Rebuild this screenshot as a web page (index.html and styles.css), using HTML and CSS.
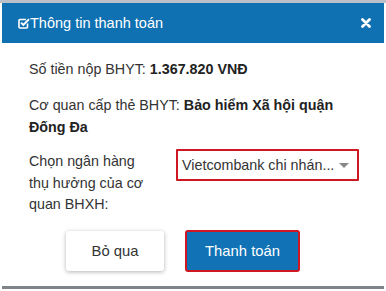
FILE: index.html
```html
<!DOCTYPE html>
<html lang="vi">
<head>
<meta charset="utf-8">
<link rel="stylesheet" href="styles.css">
</head>
<body>
<div class="page">
  <div class="modal">
    <div class="modal-header">
      <div class="title">
        <svg class="ico-check" width="12" height="12" viewBox="0 0 12 12">
          <path d="M9.5 6.5V10a1 1 0 0 1-1 1H2a1 1 0 0 1-1-1V3.5a1 1 0 0 1 1-1h6" fill="none" stroke="#fff" stroke-width="1.6"/>
          <path d="M3 5.6l2.3 2.3L11 2.2" fill="none" stroke="#fff" stroke-width="2"/>
        </svg>
        <span>Thông tin thanh toán</span>
      </div>
      <svg class="ico-close" width="10" height="10" viewBox="0 0 10 10">
        <path d="M1.5 1.5L8.5 8.5M8.5 1.5L1.5 8.5" stroke="#fff" stroke-width="2.8" stroke-linecap="round"/>
      </svg>
    </div>
    <div class="modal-body">
      <p class="line">Số tiền nộp BHYT: <b>1.367.820 VNĐ</b></p>
      <p class="line gap">Cơ quan cấp thẻ BHYT: <b>Bảo hiểm Xã hội quận Đống Đa</b></p>
      <div class="row">
        <div class="label">Chọn ngân hàng thụ hưởng của cơ quan BHXH:</div>
        <div class="select">
          <span class="select-text">Vietcombank chi nhán...</span>
          <span class="caret"></span>
        </div>
      </div>
      <div class="actions">
        <button class="btn btn-cancel">Bỏ qua</button>
        <button class="btn btn-pay">Thanh toán</button>
      </div>
    </div>
    <div class="bottom-bar"></div>
  </div>
</div>
</body>
</html>
```

FILE: styles.css
```css
html, body {
  margin: 0;
  padding: 0;
  background: #ffffff;
}
body {
  font-family: "Liberation Sans", Arial, sans-serif;
  color: #333333;
}
.page {
  border-top: 3px solid #b9c0c7;
  width: 386px;
  height: 288px;
  overflow: hidden;
}
.modal {
  margin: 0 2px;
  background: #ffffff;
}
.modal-header {
  height: 40px;
  background: #1071b2;
  display: flex;
  align-items: center;
  justify-content: space-between;
  padding: 0 13px 0 16px;
}
.title {
  display: flex;
  align-items: center;
  color: #ffffff;
  font-size: 14.5px;
}
.ico-check {
  display: block;
  margin-right: 0;
}
.ico-close {
  display: block;
}
.modal-body {
  padding: 16px 25px 14px 27px;
  font-size: 14.3px;
}
.line {
  margin: 0;
  line-height: 21.5px;
}
.line b {
  color: #222222;
}
.gap {
  margin-top: 14.5px;
}
.row {
  display: flex;
  align-items: flex-start;
  margin-top: 11px;
}
.label {
  width: 125px;
  margin-right: 22px;
  padding-top: 2px;
  line-height: 21.5px;
}
.select {
  flex: 1;
  height: 32px;
  box-sizing: border-box;
  border: 2px solid #cf1722;
  border-radius: 1px;
  display: flex;
  align-items: center;
  justify-content: space-between;
  padding: 0 8px 0 4px;
  color: #333333;
}
.select-text {
  white-space: nowrap;
  font-size: 14.3px;
}
.caret {
  width: 0;
  height: 0;
  border-left: 5px solid transparent;
  border-right: 5px solid transparent;
  border-top: 5px solid #888888;
}
.actions {
  display: flex;
  align-items: center;
  margin-top: 14px;
  padding-left: 37px;
  gap: 21px;
}
.btn {
  font-family: "Liberation Sans", Arial, sans-serif;
  font-size: 14.8px;
  cursor: pointer;
}
.btn-cancel {
  width: 98px;
  height: 40px;
  background: #ffffff;
  color: #333333;
  border: none;
  border-radius: 3px;
  box-shadow: 0 1px 4px rgba(0, 0, 0, 0.3);
}
.btn-pay {
  width: 115px;
  height: 42px;
  background: #1173b5;
  color: #ffffff;
  border: 2px solid #cf1722;
  border-radius: 3px;
}
.bottom-bar {
  height: 3px;
  background: #7e8488;
}
```
